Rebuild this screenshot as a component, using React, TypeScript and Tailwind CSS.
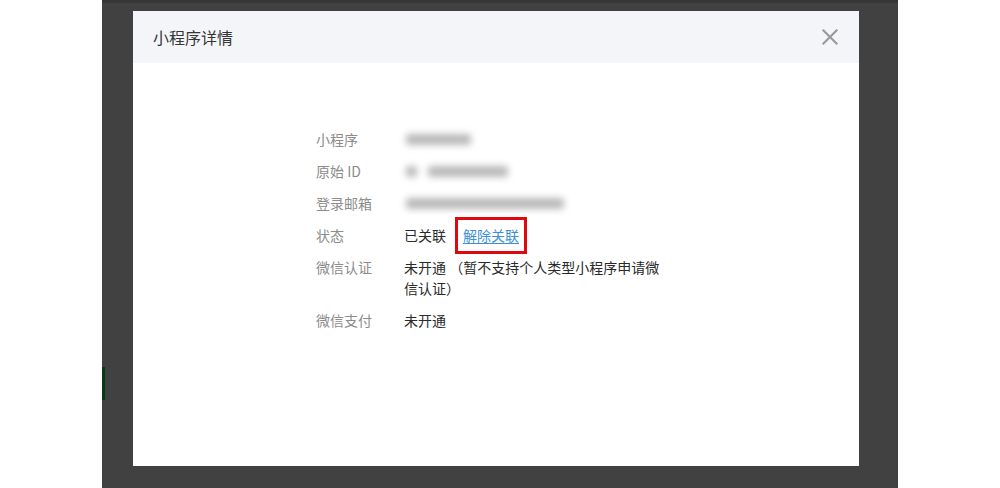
const font = { fontFamily: '"Noto Sans CJK SC", "Noto Sans", sans-serif' };

type Row = { label: string; value: React.ReactNode };

function Blurred({ segments }: { segments: [number, number][] }) {
  return (
    <div className="flex h-[21px] items-center">
      {segments.map(([ml, w], i) => (
        <div
          key={i}
          className="h-[11px] rounded-[3px] bg-[#b9b9b9] blur-[3.5px]"
          style={{ marginLeft: ml, width: w }}
        />
      ))}
    </div>
  );
}

function CloseIcon() {
  return (
    <svg width="18" height="18" viewBox="0 0 18 18" fill="none">
      <path d="M2.5 2.5 L15.5 15.5 M15.5 2.5 L2.5 15.5" stroke="#9a9a9a" strokeWidth="2.2" strokeLinecap="square" />
    </svg>
  );
}

export default function App() {
  const rows: Row[] = [
    { label: "小程序", value: <Blurred segments={[[2, 65]]} /> },
    { label: "原始 ID", value: <Blurred segments={[[2, 11], [11, 80]]} /> },
    { label: "登录邮箱", value: <Blurred segments={[[2, 158]]} /> },
    {
      label: "状态",
      value: (
        <div className="flex items-center">
          <span>已关联</span>
          <span className="ml-[9px] -my-[8px] border-[3px] border-[#e0070f] px-[5px] py-[5px]">
            <span className="text-[#3b8fd8] underline underline-offset-2">解除关联</span>
          </span>
        </div>
      ),
    },
    { label: "微信认证", value: "未开通 （暂不支持个人类型小程序申请微信认证）" },
    { label: "微信支付", value: "未开通" },
  ];

  return (
    <div className="flex h-[488px] w-[1000px] bg-white" style={font}>
      <div className="relative flex h-full w-[796px] ml-[102px] flex-col bg-[#414141] border-t-[3px] border-[#373737]">
        <div className="absolute left-0 top-[364px] h-[33px] w-[3px] bg-[#073a17]" />
        <div className="ml-[31px] mt-[8px] flex h-[455px] w-[726px] flex-col bg-white">
          <div className="flex h-[52px] items-center justify-between bg-[#f4f5f9] pl-[20px] pr-[20px]">
            <span className="text-[16px] text-[#353535]">小程序详情</span>
            <CloseIcon />
          </div>
          <div className="flex flex-col gap-[11px] pl-[183px] pt-[66px] text-[14px] leading-[21px]">
            {rows.map((r) => (
              <div key={r.label} className="flex">
                <div className="w-[88px] shrink-0 text-[#8c8c8c]">{r.label}</div>
                <div className="w-[260px] text-[#2a2a2a]">{r.value}</div>
              </div>
            ))}
          </div>
        </div>
      </div>
    </div>
  );
}
